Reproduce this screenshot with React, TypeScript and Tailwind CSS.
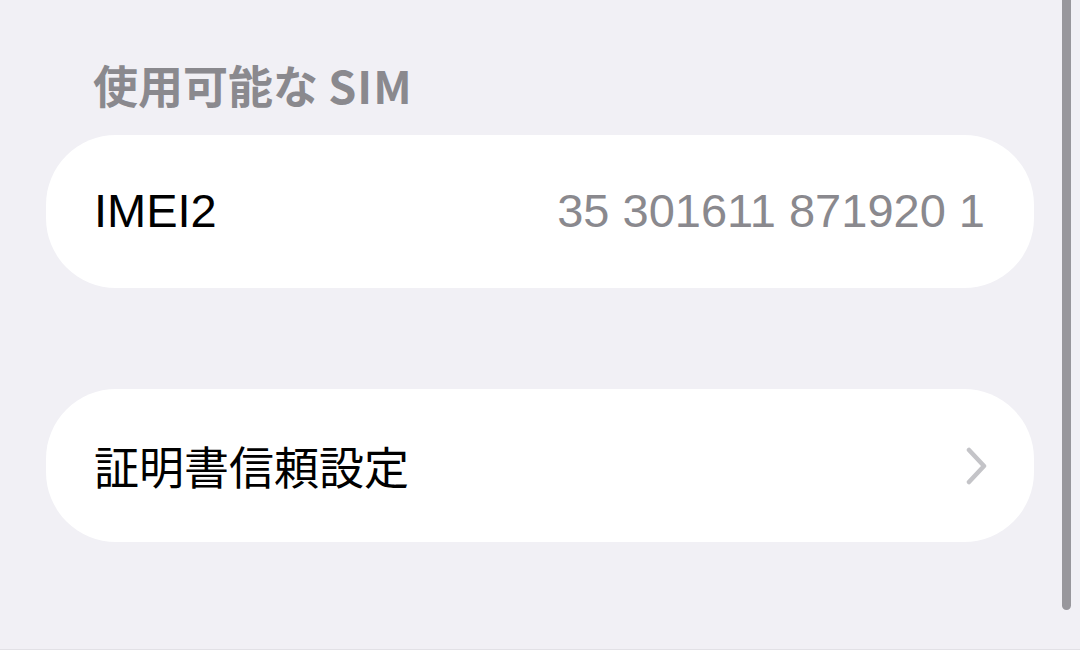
import React from 'react';

const latin = "font-['Liberation_Sans','Noto_Sans_CJK_JP',sans-serif]";
const jp = "font-['Noto_Sans_CJK_JP',sans-serif]";

function Chevron() {
  return (
    <svg width="22" height="38" viewBox="0 0 22 38" fill="none">
      <path d="M3 3 L18 19 L3 35" stroke="#c4c4c8" strokeWidth="4.5" strokeLinecap="round" strokeLinejoin="round" />
    </svg>
  );
}

export default function App() {
  return (
    <div className="relative w-[1080px] h-[650px] overflow-hidden bg-[#f1f0f5] border-b border-[#e2e1e6]">
      <div className="flex flex-col px-[46px] pt-[59px]">
        <h2 className={`${jp} pl-[47px] text-[45px] leading-[52px] font-bold text-[#8a898e]`}>
          使用可能な <span className="tracking-[1px]">SIM</span>
        </h2>

        <div className="mt-[24px] h-[153px] rounded-[70px] bg-white flex items-center justify-between pl-[48px] pr-[49px]">
          <span className={`${latin} text-[47px] text-black`}>IMEI2</span>
          <span className={`${latin} text-[47px] text-[#8a898e]`}>35 301611 871920 1</span>
        </div>

        <div className="mt-[101px] h-[153px] rounded-[70px] bg-white flex items-center justify-between pl-[48px] pr-[46px]">
          <span className={`${jp} text-[45px] leading-none text-black`}>証明書信頼設定</span>
          <Chevron />
        </div>
      </div>

      <div className="absolute right-[9px] top-0 w-[9px] h-[610px] rounded-b-full bg-[#98979c]" />
    </div>
  );
}
